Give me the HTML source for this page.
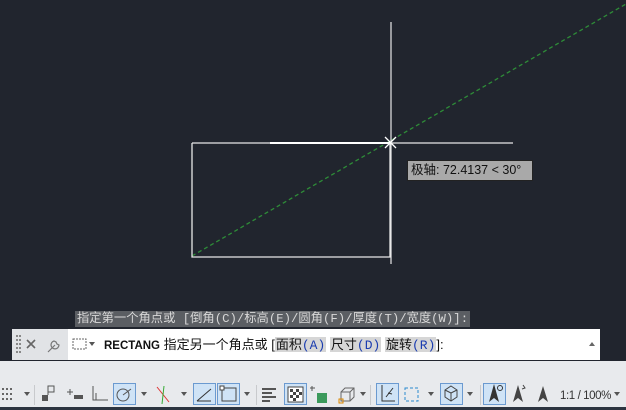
<!DOCTYPE html>
<html><head><meta charset="utf-8"><style>
*{margin:0;padding:0;box-sizing:border-box}
body{width:626px;height:410px;background:#21252e;position:relative;overflow:hidden;font-family:"Liberation Sans","Noto Sans CJK SC",sans-serif}
.a{position:absolute}
.prev{left:75px;top:311px;height:16px;background:#5b5e63;color:#d8d8d8;font:12.3px "Liberation Mono","Noto Sans CJK SC",monospace;line-height:16px;padding:0 2px;white-space:nowrap}
.cmd{left:12px;top:329px;width:588px;height:31px;background:#fff}
.cmdl{left:12px;top:329px;width:56px;height:31px;background:#e1e3e6}
.ct{left:104px;top:329px;height:31px;line-height:31px;font-size:13px;color:#111;white-space:nowrap}
.hl{background:#d6d6d6;padding:0 1px}
.bl{color:#1a3cb0;font-family:"Liberation Mono",monospace}
.tb{left:0;top:361px;width:626px;height:46px;background:#e8eaed}
.bot{left:0;top:407px;width:626px;height:3px;background:#2c3440}
.act{position:absolute;top:383px;width:23px;height:22px;background:#cfe3f6;border:1px solid #6b9ad0}
.sep{position:absolute;top:385px;width:1px;height:20px;background:#c8cacd}
.dd{position:absolute;top:392px;width:0;height:0;border-left:3.5px solid transparent;border-right:3.5px solid transparent;border-top:4px solid #555}
</style></head><body>
<svg class="a" style="left:0;top:0" width="626" height="410">
<line x1="192" y1="256" x2="626" y2="4" stroke="#2e8c38" stroke-width="1.3" stroke-dasharray="4,3"/>
<polyline points="192,143 192,257 390,257 390,143 192,143" fill="none" stroke="#e8e8e8" stroke-width="1.3"/>
<line x1="270" y1="143" x2="390" y2="143" stroke="#fff" stroke-width="2"/>
<line x1="391" y1="22" x2="391" y2="264" stroke="#e8e8e8" stroke-width="1.2"/>
<line x1="390" y1="143" x2="513" y2="143" stroke="#e8e8e8" stroke-width="1.2"/>
<path d="M385,137 L396,148 M396,137 L385,148" stroke="#fff" stroke-width="1.3"/>
</svg>
<div class="a" style="left:407px;top:160px;width:126px;height:21px;background:#a9a9a9;border:1px solid #222;font-size:12.5px;line-height:19px;color:#111;padding-left:3px">极轴: 72.4137 &lt; 30°</div>
<div class="a prev">指定第一个角点或 [倒角(C)/标高(E)/圆角(F)/厚度(T)/宽度(W)]:</div>
<div class="a cmd"></div><div class="a cmdl"></div>
<svg class="a" style="left:12px;top:329px" width="90" height="31">
<g fill="#888"><rect x="4" y="6" width="2" height="2"/><rect x="4" y="10" width="2" height="2"/><rect x="4" y="14" width="2" height="2"/><rect x="4" y="18" width="2" height="2"/><rect x="4" y="22" width="2" height="2"/><rect x="7" y="6" width="2" height="2"/><rect x="7" y="10" width="2" height="2"/><rect x="7" y="14" width="2" height="2"/><rect x="7" y="18" width="2" height="2"/><rect x="7" y="22" width="2" height="2"/></g>
<path d="M15,11 L23,19 M23,11 L15,19" stroke="#666" stroke-width="1.6"/>
<path d="M36,23 L43,16 M42,12 a4,4 0 1 0 5,4 l-2,-1 -1,-2z" stroke="#777" fill="none" stroke-width="1.2"/>
<rect x="61" y="10" width="13" height="10" fill="none" stroke="#666" stroke-dasharray="2,1"/>
<path d="M77,13 l6,0 -3,4z" fill="#555"/>
</svg>
<div class="a ct"><b style="font-size:11.5px">RECTANG</b> 指定另一个角点或 [<span class="hl">面积<span class="bl">(A)</span></span> <span class="hl">尺寸<span class="bl">(D)</span></span> <span class="hl">旋转<span class="bl">(R)</span></span>]:</div>
<div class="a" style="left:589px;top:342px;border-left:3px solid transparent;border-right:3px solid transparent;border-bottom:4px solid #666"></div>
<div class="a tb"></div><div class="a bot"></div>
<div class="act" style="left:113px"></div><div class="act" style="left:193px"></div><div class="act" style="left:217px"></div><div class="act" style="left:284px"></div><div class="act" style="left:376px"></div><div class="act" style="left:440px"></div><div class="act" style="left:483px"></div>
<div class="sep" style="left:34px"></div><div class="sep" style="left:256px"></div><div class="sep" style="left:370px"></div><div class="sep" style="left:480px"></div>
<div class="dd" style="left:24px"></div><div class="dd" style="left:141px"></div><div class="dd" style="left:181px"></div><div class="dd" style="left:244px"></div><div class="dd" style="left:360px"></div><div class="dd" style="left:428px"></div><div class="dd" style="left:467px"></div><div class="dd" style="left:614px"></div>
<svg class="a" style="left:0;top:380px" width="626" height="28">
<g fill="#666"><rect x="2" y="8" width="2" height="2"/><rect x="6" y="8" width="2" height="2"/><rect x="10" y="8" width="2" height="2"/><rect x="2" y="13" width="2" height="2"/><rect x="6" y="13" width="2" height="2"/><rect x="10" y="13" width="2" height="2"/><rect x="2" y="18" width="2" height="2"/><rect x="6" y="18" width="2" height="2"/><rect x="10" y="18" width="2" height="2"/></g>
<rect x="42" y="15" width="6" height="6" fill="#555"/><path d="M48,15 V6 h6 v6 h-6" fill="none" stroke="#555"/>
<path d="M70,9 v6 M67,12 h6" stroke="#555"/><rect x="74" y="15" width="9" height="4" fill="#555"/>
<path d="M93,6 V20 H108" fill="none" stroke="#555"/><path d="M96,13 v7" stroke="#555"/>
<circle cx="123" cy="15" r="6" fill="none" stroke="#555"/><path d="M123,15 L131,9" stroke="#555"/>
<path d="M157,7 L169,22" stroke="#d33"/><path d="M164,6 L162,24" stroke="#3a3"/>
<path d="M197,21 L211,9 M197,21 H211" stroke="#333" fill="none"/>
<rect x="222" y="8" width="14" height="13" fill="none" stroke="#444"/><rect x="220" y="6" width="4" height="4" fill="#fff" stroke="#444"/>
<g fill="#555"><rect x="262" y="8" width="14" height="2"/><rect x="262" y="12" width="10" height="2"/><rect x="262" y="16" width="14" height="2"/><rect x="262" y="20" width="8" height="2"/></g>
<rect x="288" y="7" width="15" height="15" fill="#fff" stroke="#444"/><g fill="#444"><rect x="290" y="9" width="3" height="3"/><rect x="296" y="9" width="3" height="3"/><rect x="293" y="12" width="3" height="3"/><rect x="299" y="12" width="3" height="3"/><rect x="290" y="15" width="3" height="3"/><rect x="296" y="15" width="3" height="3"/><rect x="293" y="18" width="3" height="3"/></g>
<path d="M312,6 v5 M310,8 h5" stroke="#555"/><rect x="317" y="13" width="10" height="10" fill="#3b9a5c"/>
<path d="M341,12 l4,-4 h9 v9 l-4,4 h-9z M341,12 h9 v9 M350,12 l4,-4" fill="none" stroke="#666"/><rect x="339" y="19" width="4" height="4" fill="none" stroke="#d80"/>
<path d="M382,5 V21 H395 M386,17 l7,-9 M388,13 l4,1" stroke="#333" fill="none"/>
<rect x="405" y="8" width="13" height="13" fill="none" stroke="#2a8ad0" stroke-dasharray="3,2"/>
<path d="M451,6 l6,4 v7 l-6,4 -6,-4 v-7z M451,13 v8 M451,13 l6,-3 M451,13 l-6,-3" fill="none" stroke="#444"/>
<path d="M494,4 L489,22 L494,18 L499,22z" fill="#333"/><circle cx="500" cy="8" r="2.5" fill="none" stroke="#333"/>
<path d="M518,5 L513,22 L518,18 L523,22z" fill="#444"/><path d="M523,5 l2,3 -3,1" stroke="#444" fill="none"/>
<path d="M543,6 L538,22 L543,18 L548,22z" fill="#444"/>
<text x="560" y="19" font-family="Liberation Sans" font-size="11.5" letter-spacing="-0.4" fill="#333">1:1 / 100%</text>
</svg>
</body></html>
